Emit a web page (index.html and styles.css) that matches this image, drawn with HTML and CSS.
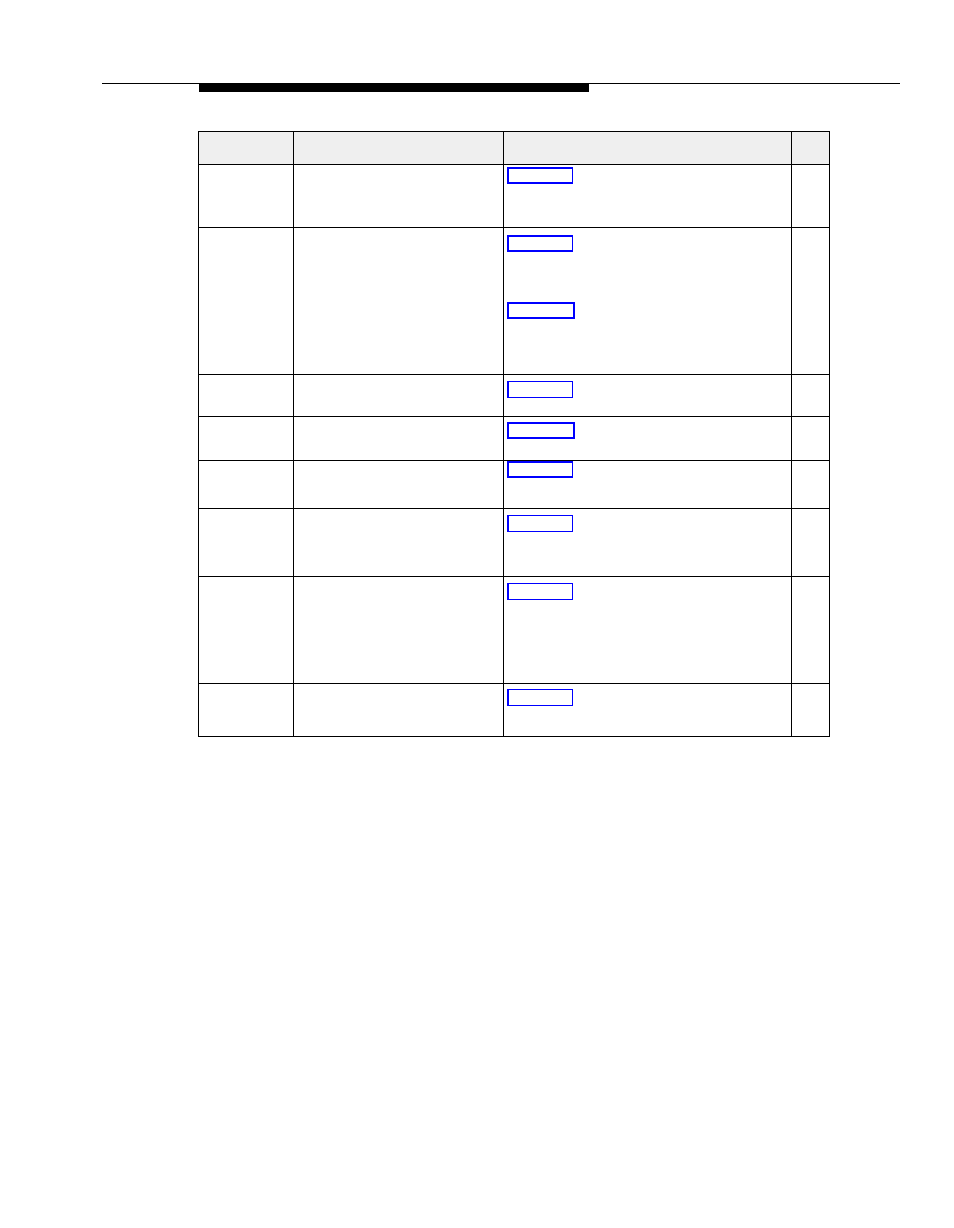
FILE: index.html
```html
<!DOCTYPE html>
<html lang="en">
<head>
<meta charset="utf-8">
<title>Table</title>
<link rel="stylesheet" href="styles.css">
</head>
<body>
<div class="page">
  <div class="rule"></div>
  <div class="bar"></div>
  <div class="table">
    <div class="row head h33">
      <div class="cell c1"></div><div class="cell c2"></div><div class="cell c3"></div><div class="cell c4"></div>
    </div>
    <div class="row h63">
      <div class="cell c1"></div><div class="cell c2"></div>
      <div class="cell c3 pt2"><div class="link bold"></div></div><div class="cell c4"></div>
    </div>
    <div class="row h147">
      <div class="cell c1"></div><div class="cell c2"></div>
      <div class="cell c3 pt7"><div class="link bold"></div><div class="link thick gap"></div></div><div class="cell c4"></div>
    </div>
    <div class="row h42">
      <div class="cell c1"></div><div class="cell c2"></div>
      <div class="cell c3 pt6"><div class="link"></div></div><div class="cell c4"></div>
    </div>
    <div class="row h44">
      <div class="cell c1"></div><div class="cell c2"></div>
      <div class="cell c3 pt5"><div class="link thick"></div></div><div class="cell c4"></div>
    </div>
    <div class="row h48">
      <div class="cell c1"></div><div class="cell c2"></div>
      <div class="cell c3 pt0"><div class="link bold"></div></div><div class="cell c4"></div>
    </div>
    <div class="row h68">
      <div class="cell c1"></div><div class="cell c2"></div>
      <div class="cell c3 pt6"><div class="link"></div></div><div class="cell c4"></div>
    </div>
    <div class="row h107">
      <div class="cell c1"></div><div class="cell c2"></div>
      <div class="cell c3 pt6"><div class="link"></div></div><div class="cell c4"></div>
    </div>
    <div class="row h53">
      <div class="cell c1"></div><div class="cell c2"></div>
      <div class="cell c3 pt5"><div class="link"></div></div><div class="cell c4"></div>
    </div>
  </div>
</div>
</body>
</html>
```
FILE: styles.css
```css
html, body {
  margin: 0;
  padding: 0;
  background: #ffffff;
  font-family: "Liberation Sans", Arial, sans-serif;
}
.page {
  width: 954px;
  min-height: 1228px;
  padding-top: 83px;
  box-sizing: border-box;
}
.rule {
  margin-left: 102px;
  width: 798px;
  height: 1px;
  background: #000000;
}
.bar {
  margin-left: 199px;
  width: 390px;
  height: 8px;
  background: #000000;
}
.table {
  margin-top: 39px;
  margin-left: 198px;
  width: 632px;
  box-sizing: border-box;
  border-top: 1px solid #000000;
  border-left: 1px solid #000000;
}
.row {
  display: flex;
  box-sizing: border-box;
  border-bottom: 1px solid #000000;
}
.row.head { background: #efefef; }
.cell {
  box-sizing: border-box;
  border-right: 1px solid #000000;
  height: 100%;
}
.c1 { width: 95px; }
.c2 { width: 210px; }
.c3 { width: 288px; padding-left: 3px; }
.c4 { width: 38px; }
.h33 { height: 33px; }
.h63 { height: 63px; }
.h147 { height: 147px; }
.h42 { height: 42px; }
.h44 { height: 44px; }
.h48 { height: 48px; }
.h68 { height: 68px; }
.h107 { height: 107px; }
.h53 { height: 53px; }
.pt0 { padding-top: 0; }
.pt2 { padding-top: 2px; }
.pt5 { padding-top: 5px; }
.pt6 { padding-top: 6px; }
.pt7 { padding-top: 7px; }
.link {
  box-sizing: border-box;
  width: 66px;
  height: 17px;
  border: 1px solid #0000ff;
  border-left-width: 2px;
}
.link.thick {
  width: 68px;
  border-width: 2px;
}
.link.bold {
  border-width: 2px 1px 2px 2px;
}
.link.gap { margin-top: 50px; }
```
